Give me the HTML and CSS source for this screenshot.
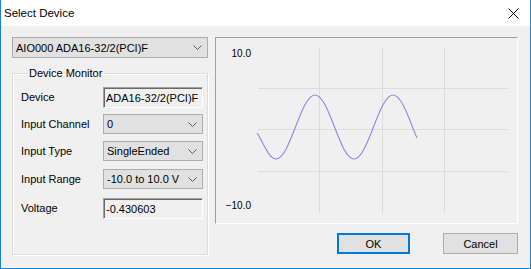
FILE: index.html
```html
<!DOCTYPE html>
<html>
<head>
<meta charset="utf-8">
<title>Select Device</title>
<link rel="stylesheet" href="styles.css">
</head>
<body>
<div class="window">
  <div class="titlebar">
    <span class="title">Select Device</span>
    <svg class="close" width="11" height="11" viewBox="0 0 11 11"><path d="M0.5 0.5 L10.5 10.5 M10.5 0.5 L0.5 10.5" stroke="#000" stroke-width="1" fill="none"/></svg>
  </div>
  <div class="content">
    <div class="left">
      <div class="combo">
        <span class="combo-text">AIO000 ADA16-32/2(PCI)F</span>
        <svg class="chev" width="9" height="5" viewBox="0 0 9 5"><polyline points="0.5,0.5 4.5,4.5 8.5,0.5" fill="none" stroke="#5a5a5a" stroke-width="1"/></svg>
      </div>
      <fieldset class="group">
        <legend>Device Monitor</legend>
        <div class="form">
          <span class="label">Device</span>
          <div class="field">ADA16-32/2(PCI)F</div>
          <span class="label">Input Channel</span>
          <div class="combo small"><span class="combo-text">0</span><svg class="chev" width="9" height="5" viewBox="0 0 9 5"><polyline points="0.5,0.5 4.5,4.5 8.5,0.5" fill="none" stroke="#5a5a5a" stroke-width="1"/></svg></div>
          <span class="label">Input Type</span>
          <div class="combo small"><span class="combo-text">SingleEnded</span><svg class="chev" width="9" height="5" viewBox="0 0 9 5"><polyline points="0.5,0.5 4.5,4.5 8.5,0.5" fill="none" stroke="#5a5a5a" stroke-width="1"/></svg></div>
          <span class="label">Input Range</span>
          <div class="combo small"><span class="combo-text">-10.0 to 10.0 V</span><svg class="chev" width="9" height="5" viewBox="0 0 9 5"><polyline points="0.5,0.5 4.5,4.5 8.5,0.5" fill="none" stroke="#5a5a5a" stroke-width="1"/></svg></div>
          <span class="label">Voltage</span>
          <div class="field">-0.430603</div>
        </div>
      </fieldset>
    </div>
    <div class="right">
      <div class="chart">
        <svg width="301" height="185" viewBox="0 0 301 185">
          <g stroke="#dcdcdc" stroke-width="1">
            <line x1="103.5" y1="9" x2="103.5" y2="175"/>
            <line x1="166.5" y1="9" x2="166.5" y2="175"/>
            <line x1="228.5" y1="9" x2="228.5" y2="175"/>
            <line x1="42" y1="50.5" x2="291" y2="50.5"/>
            <line x1="42" y1="91.5" x2="291" y2="91.5"/>
            <line x1="42" y1="133.5" x2="291" y2="133.5"/>
          </g>
          <text x="35" y="19" class="axis" text-anchor="end">10.0</text>
          <text x="35" y="171" class="axis" text-anchor="end">−10.0</text>
          <path d="M41,95 L43,98 L46,103.7 L49,109.2 L52,114.6 L55,118.5 L58,120.6 L60,121 C67.04,121 73.15,105.38 79.5,89 C85.85,72.62 91.96,57 99,57 C106.04,57 112.15,72.62 118.5,89 C124.85,105.38 130.96,121 138,121 C145.04,121 151.15,105.38 157.5,89 C163.85,72.62 169.96,57 177,57 C184.04,57 190.15,72.62 196.5,89 L199,95.4 L201,100" fill="none" stroke="#9a7ee6" stroke-width="1.1"/>
        </svg>
      </div>
      <div class="buttons">
        <button class="btn default">OK</button>
        <button class="btn cancel">Cancel</button>
      </div>
    </div>
  </div>
</div>
</body>
</html>
```

FILE: styles.css
```css
* { box-sizing: border-box; }
html, body { margin: 0; padding: 0; background: #f0f0f0; }
body {
  font-family: "Liberation Sans", Arial, sans-serif;
  font-size: 11px;
  color: #000;
}
.window {
  width: 531px;
  height: 269px;
  border: 1px solid #1883d7;
  border-top: none;
  background: #f0f0f0;
  display: flex;
  flex-direction: column;
}
.titlebar {
  height: 26px;
  background: #fff;
  display: flex;
  align-items: center;
  justify-content: space-between;
  padding: 0 11px 0 3px;
  flex: none;
}
.title {
  font-size: 11.5px;
  color: #000;
}
.close { display: block; }
.content {
  display: flex;
  gap: 7px;
  padding: 11px 12px 0 11px;
}
.left {
  width: 196px;
  display: flex;
  flex-direction: column;
}
.right {
  width: 303px;
  display: flex;
  flex-direction: column;
}
.combo {
  height: 21px;
  background: #e1e1e1;
  border: 1px solid #adadad;
  display: flex;
  align-items: center;
  justify-content: space-between;
  padding: 0 5px 0 3px;
  white-space: nowrap;
}
.combo.small { height: 20px; }
.chev { display: block; flex: none; }
.group {
  margin: 8px 0 0 0;
  padding: 7px 4px 35px 8px;
  border: 1px solid #dcdcdc;
  box-shadow: inset 1px 1px 0 #fff, 1px 1px 0 #fff;
  min-width: 0;
}
.group legend {
  padding: 0 2px;
  margin-left: 6px;
  line-height: 14px;
  font-size: 11px;
}
.form {
  display: grid;
  grid-template-columns: 82px 100px;
  grid-template-rows: 27px 27px 28px 29px 21px;
  align-items: start;
}
.label {
  line-height: 20px;
  white-space: nowrap;
}
.field {
  height: 21px;
  border: 1px solid;
  border-color: #a0a0a0 #fff #fff #a0a0a0;
  box-shadow: inset 1px 1px 0 #696969;
  padding: 2px 0 0 2px;
  line-height: 16px;
  white-space: nowrap;
  overflow: hidden;
}
.chart {
  height: 187px;
  border: 1px solid;
  border-color: #a0a0a0 #fff #fff #a0a0a0;
  background: #f0f0f0;
}
.chart svg { display: block; }
.axis {
  font-family: "Liberation Sans", Arial, sans-serif;
  font-size: 10px;
  fill: #000;
}
.buttons {
  display: flex;
  justify-content: flex-end;
  gap: 33px;
  margin-top: 9px;
}
.btn {
  height: 21px;
  background: #e1e1e1;
  border: 1px solid #adadad;
  font-family: "Liberation Sans", Arial, sans-serif;
  font-size: 11px;
  color: #000;
  padding: 0;
  margin: 0;
}
.btn.default {
  width: 73px;
  border-color: #0078d7;
  box-shadow: inset 0 0 0 1px #0078d7;
}
.btn.cancel { width: 75px; }
```
